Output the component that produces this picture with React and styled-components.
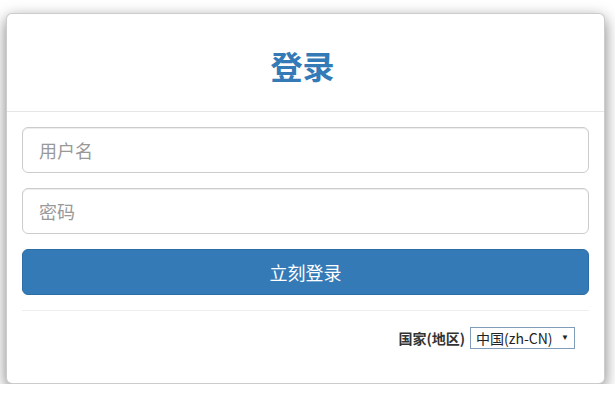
import React from "react";
import styled, { createGlobalStyle } from "styled-components";

const Global = createGlobalStyle`
  html, body { margin: 0; padding: 0; background: #fff; }
  body {
    font-family: "Liberation Sans", "Noto Sans CJK SC", sans-serif;
    color: #333;
  }
  * { box-sizing: border-box; }
`;

const Page = styled.div`
  padding: 13px 10px 0 6px;
`;

const Card = styled.div`
  width: 599px;
  background: #fff;
  border: 1px solid rgba(0, 0, 0, 0.2);
  border-radius: 6px;
  box-shadow: 0 5px 15px rgba(0, 0, 0, 0.5);
  display: flex;
  flex-direction: column;
`;

const Header = styled.div`
  height: 98px;
  border-bottom: 1px solid #e5e5e5;
  display: flex;
  align-items: center;
  justify-content: center;
  padding: 5px 6px 0 0;
`;

const Title = styled.h1`
  margin: 0;
  font-size: 32px;
  font-weight: 700;
  color: #337ab7;
  font-family: "Noto Sans CJK SC", sans-serif;
  line-height: 1;
`;

const Body = styled.div`
  padding: 15px 15px 0;
  display: flex;
  flex-direction: column;
  gap: 15px;
`;

const Input = styled.input`
  display: block;
  width: 100%;
  height: 46px;
  padding: 10px 16px;
  font-size: 18px;
  border: 1px solid #ccc;
  border-radius: 6px;
  font-family: "Noto Sans CJK SC", sans-serif;
  color: #555;
  box-shadow: inset 0 1px 1px rgba(0, 0, 0, 0.075);
  outline: none;
  &::placeholder { color: #999; }
`;

const Button = styled.button`
  height: 46px;
  width: 100%;
  border: 1px solid #2e6da4;
  border-radius: 6px;
  background: #337ab7;
  color: #fff;
  font-size: 18px;
  font-family: "Noto Sans CJK SC", sans-serif;
  cursor: pointer;
`;

const Divider = styled.hr`
  margin: 0;
  border: 0;
  border-top: 1px solid #eee;
`;

const Footer = styled.div`
  display: flex;
  justify-content: flex-end;
  align-items: center;
  gap: 5px;
  margin-top: -15px;
  padding: 15px 14px 34px 0;
  height: 72px;
`;

const Label = styled.label`
  font-size: 14px;
  font-weight: 700;
  color: #333;
  font-family: "Noto Sans CJK SC", sans-serif;
`;

const SelectWrap = styled.div`
  position: relative;
  width: 105px;
  height: 22px;
`;

const Select = styled.select`
  appearance: none;
  width: 100%;
  height: 100%;
  border: 1px solid #7f9db9;
  border-radius: 0;
  background: #fff;
  font-size: 14px;
  font-family: "Noto Sans CJK SC", sans-serif;
  color: #222;
  padding: 0 0 0 5px;
  outline: none;
`;

const Arrow = styled.span`
  position: absolute;
  right: 6px;
  top: 50%;
  transform: translateY(-60%);
  font-size: 8px;
  color: #222;
  pointer-events: none;
`;

export default function App() {
  return (
    <>
      <Global />
      <Page>
        <Card>
          <Header>
            <Title>登录</Title>
          </Header>
          <Body>
            <Input type="text" placeholder="用户名" />
            <Input type="password" placeholder="密码" />
            <Button>立刻登录</Button>
            <Divider />
            <Footer>
              <Label>国家(地区)</Label>
              <SelectWrap>
                <Select defaultValue="zh-CN">
                  <option value="zh-CN">中国(zh-CN)</option>
                </Select>
                <Arrow>▼</Arrow>
              </SelectWrap>
            </Footer>
          </Body>
        </Card>
      </Page>
    </>
  );
}
